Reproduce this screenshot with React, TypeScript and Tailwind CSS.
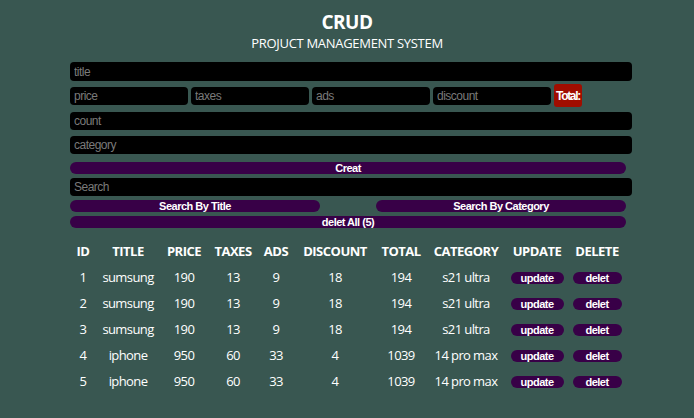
import React from "react";

const rows = [
  { id: 1, title: "sumsung", price: 190, taxes: 13, ads: 9, discount: 18, total: 194, category: "s21 ultra" },
  { id: 2, title: "sumsung", price: 190, taxes: 13, ads: 9, discount: 18, total: 194, category: "s21 ultra" },
  { id: 3, title: "sumsung", price: 190, taxes: 13, ads: 9, discount: 18, total: 194, category: "s21 ultra" },
  { id: 4, title: "iphone", price: 950, taxes: 60, ads: 33, discount: 4, total: 1039, category: "14 pro max" },
  { id: 5, title: "iphone", price: 950, taxes: 60, ads: 33, discount: 4, total: 1039, category: "14 pro max" },
];

const cols = ["w-[26px]", "w-[64px]", "w-[48px]", "w-[50px]", "w-[36px]", "w-[82px]", "w-[50px]", "w-[80px]", "w-[62px]", "w-[58px]"];
const heads = ["ID", "TITLE", "PRICE", "TAXES", "ADS", "DISCOUNT", "TOTAL", "CATEGORY", "UPDATE", "DELETE"];

const inputCls =
  "h-[18px] rounded-[4px] bg-black px-[4px] text-[12px] tracking-[-0.5px] text-white placeholder:text-[#7a7a7a] outline-none font-['Liberation_Sans',Arial,sans-serif]";
const btnCls =
  "h-[12px] rounded-full bg-[#380047] text-white text-[11px] tracking-[-0.5px] font-bold leading-[12px] font-['Liberation_Sans',Arial,sans-serif]";

export default function App() {
  return (
    <div className="w-[694px] h-[418px] bg-[#395751] text-white font-['Open_Sans','Noto_Sans',sans-serif] overflow-hidden">
      <div className="flex flex-col items-center pt-[10px]">
        <h1 className="text-[19px] font-bold leading-[24px] tracking-[-0.5px]">CRUD</h1>
        <p className="text-[13px] leading-[18px] tracking-[-0.3px]">PROJUCT MANAGEMENT SYSTEM</p>
      </div>

      <div className="ml-[70px] w-[562px] flex flex-col mt-[10px]">
        <input className={inputCls + " h-[19px]"} placeholder="title" />
        <div className="flex items-center gap-[3px] mt-[3px] h-[23px]">
          <input className={inputCls + " w-[118px]"} placeholder="price" />
          <input className={inputCls + " w-[118px]"} placeholder="taxes" />
          <input className={inputCls + " w-[118px]"} placeholder="ads" />
          <input className={inputCls + " w-[118px]"} placeholder="discount" />
          <div className="h-[23px] w-[28px] rounded-[3px] bg-[#a10d00] flex items-center justify-center text-[12px] tracking-[-1.3px] font-bold font-['Liberation_Sans',Arial,sans-serif]">
            Total:
          </div>
        </div>
        <input className={inputCls + " mt-[5px]"} placeholder="count" />
        <input className={inputCls + " mt-[6px]"} placeholder="category" />
        <button className={btnCls + " w-[556px] mt-[8px]"}>Creat</button>
        <input className={inputCls + " mt-[4px]"} placeholder="Search" />
        <div className="flex justify-between w-[556px] mt-[4px]">
          <button className={btnCls + " w-[250px]"}>Search By Title</button>
          <button className={btnCls + " w-[250px]"}>Search By Category</button>
        </div>
        <button className={btnCls + " w-[556px] mt-[4px]"}>delet All (5)</button>

        <table className="w-[556px] mt-[11px] border-collapse table-fixed">
          <thead>
            <tr className="h-[26px]">
              {heads.map((h, i) => (
                <th key={h} className={cols[i] + " text-[13px] tracking-[-0.5px] font-bold p-0 text-center"}>
                  {h}
                </th>
              ))}
            </tr>
          </thead>
          <tbody>
            {rows.map((r) => (
              <tr key={r.id} className="h-[26px] text-[13px] tracking-[-0.6px] text-center">
                <td className="p-0">{r.id}</td>
                <td className="p-0">{r.title}</td>
                <td className="p-0">{r.price}</td>
                <td className="p-0">{r.taxes}</td>
                <td className="p-0">{r.ads}</td>
                <td className="p-0">{r.discount}</td>
                <td className="p-0">{r.total}</td>
                <td className="p-0">{r.category}</td>
                <td className="p-0">
                  <button className={btnCls + " w-[53px]"}>update</button>
                </td>
                <td className="p-0">
                  <button className={btnCls + " w-[49px]"}>delet</button>
                </td>
              </tr>
            ))}
          </tbody>
        </table>
      </div>
    </div>
  );
}
